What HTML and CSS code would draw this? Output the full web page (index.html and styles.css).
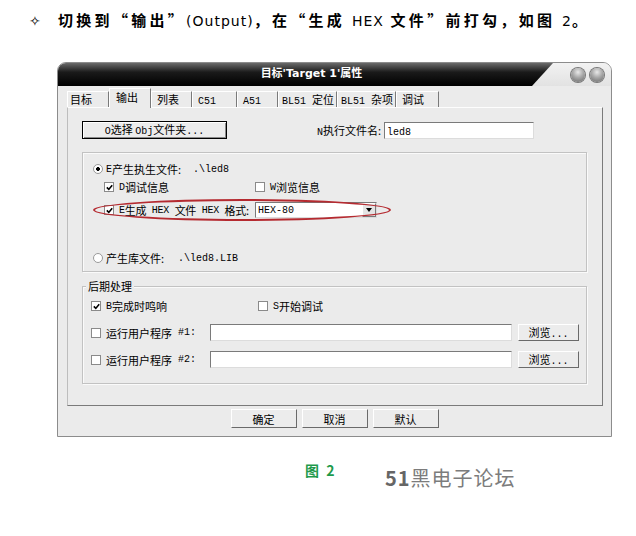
FILE: index.html
```html
<!DOCTYPE html>
<html lang="zh-CN">
<head>
  <meta charset="UTF-8">
  <meta name="viewport" content="width=device-width, initial-scale=1.0">
  <title>输出设置</title>
  <link rel="stylesheet" href="styles.css">
</head>
<body>
  <p class="intro"><span class="star">✧</span>切换到“输出”<span class="lat">(Output)</span>，在“生成 <span class="lat">HEX</span> 文件”前打勾，如图 <span class="lat">2</span>。</p>

  <div class="window">
    <div class="titlebar">
      <div class="title">目标'Target 1'属性</div>
      <div class="controls"><span class="knob"></span><span class="knob"></span></div>
    </div>

    <div class="tabs">
      <div class="tab first">目标</div>
      <div class="tab active">输出</div>
      <div class="tab w41">列表</div>
      <div class="tab w45"><span class="m">C51</span></div>
      <div class="tab w41"><span class="m">A51</span></div>
      <div class="tab w59"><span class="m">BL51 </span>定位</div>
      <div class="tab w59"><span class="m">BL51 </span>杂项</div>
      <div class="tab w43">调试</div>
    </div>

    <div class="panel">
      <div class="line top-row">
        <button class="btn default"><span class="m">O</span>选择 <span class="m">Obj</span>文件夹<span class="m">...</span></button>
        <span class="name-label"><span class="m">N</span>执行文件名:</span>
        <span class="field name-field"><span class="m">led8</span></span>
      </div>

      <div class="group output-group">
        <div class="line radio-line"><span class="radio on"></span><span class="m">E</span>产生执生文件:<span class="m path exe">.\led8</span></div>
        <div class="line sub">
          <span class="cell"><span class="cb"><svg width="7" height="7" viewBox="0 0 7 7"><path d="M0.8 3.4 L2.8 5.4 L6.2 1.2" fill="none" stroke="#000" stroke-width="1.6"/></svg></span><span class="m">D</span>调试信息</span>
          <span class="cell"><span class="cb"></span><span class="m">W</span>浏览信息</span>
        </div>
        <div class="line sub hex">
          <span class="cell tight"><span class="cb"><svg width="7" height="7" viewBox="0 0 7 7"><path d="M0.8 3.4 L2.8 5.4 L6.2 1.2" fill="none" stroke="#000" stroke-width="1.6"/></svg></span><span class="m">E</span>生成<span class="m"> HEX </span>文件<span class="m"> HEX </span>格式:</span>
          <span class="select"><span class="m">HEX-80</span><span class="drop"></span></span>
        </div>
        <div class="line radio-line lib"><span class="radio"></span>产生库文件:<span class="m path libpath">.\led8.LIB</span></div>
        <span class="mark"></span>
      </div>

      <div class="group post-group">
        <div class="legend">后期处理</div>
        <div class="line first-line">
          <span class="cell beep"><span class="cb"><svg width="7" height="7" viewBox="0 0 7 7"><path d="M0.8 3.4 L2.8 5.4 L6.2 1.2" fill="none" stroke="#000" stroke-width="1.6"/></svg></span><span class="m">B</span>完成时鸣响</span>
          <span class="cell"><span class="cb"></span><span class="m">S</span>开始调试</span>
        </div>
        <div class="line run">
          <span class="cell prog"><span class="cb"></span>运行用户程序<span class="m"> #1:</span></span>
          <span class="field prog-field"></span>
          <button class="btn browse">浏览<span class="m">...</span></button>
        </div>
        <div class="line run">
          <span class="cell prog"><span class="cb"></span>运行用户程序<span class="m"> #2:</span></span>
          <span class="field prog-field"></span>
          <button class="btn browse">浏览<span class="m">...</span></button>
        </div>
      </div>
    </div>

    <div class="actions">
      <button class="btn action">确定</button>
      <button class="btn action">取消</button>
      <button class="btn action">默认</button>
    </div>
  </div>

  <div class="caption">
    <span class="fig">图 2</span>
    <span class="site"><b>51</b>黑电子论坛</span>
  </div>
</body>
</html>
```

FILE: styles.css
```css
body {
  margin: 0;
  width: 636px;
  height: 536px;
  background: #fff;
  font-family: "Noto Sans CJK SC", sans-serif;
  font-size: 11px;
  color: #000;
  overflow: hidden;
}

/* 西文部分用等宽字体 */
.m {
  font-family: "Liberation Mono", monospace;
  font-size: 10px;
  white-space: pre;
}

/* 说明文字 */
.intro {
  margin: 10px 0 0 29px;
  height: 20px;
  line-height: 20px;
  font-family: "Noto Sans CJK SC", sans-serif;
  font-size: 15px;
  font-weight: bold;
  letter-spacing: 3.3px;
  white-space: nowrap;
}

.intro .star {
  display: inline-block;
  width: 29px;
  font-family: "DejaVu Sans", sans-serif;
  font-size: 14px;
  font-weight: normal;
  letter-spacing: 0;
}

.intro .lat {
  font-family: "DejaVu Sans", sans-serif;
  font-size: 14px;
  font-weight: normal;
  letter-spacing: 1px;
}

/* 窗口 */
.window {
  margin: 32px 0 0 57px;
  width: 555px;
  height: 375px;
  box-sizing: border-box;
  border: 1px solid #8c8c8c;
  border-radius: 9px 9px 0 0;
  background: #ebebeb;
  overflow: hidden;
}

.titlebar {
  display: flex;
  height: 23px;
  background: linear-gradient(#f2f2f2, #e2e2e2);
}

.title {
  width: 495px;
  padding-left: 12px;
  box-sizing: border-box;
  background: linear-gradient(#6a6a6a, #1a1a1a 40%, #000);
  clip-path: polygon(0 0, 100% 0, calc(100% - 21px) 100%, 0 100%);
  color: #fff;
  font: bold 11px "DejaVu Sans", "Noto Sans CJK SC", sans-serif;
  line-height: 22px;
  text-align: center;
}

.controls {
  flex: 1;
  display: flex;
  justify-content: flex-end;
  align-items: center;
  gap: 5px;
  padding-right: 7px;
}

.knob {
  width: 14px;
  height: 14px;
  border-radius: 50%;
  background: radial-gradient(circle at 50% 30%, #e8e8e8, #a8a8a8 45%, #666 100%);
  box-shadow: 0 0 0 1px #777;
}

/* 选项卡 */
.tabs {
  display: flex;
  align-items: flex-end;
  height: 21px;
  margin-left: 9px;
}

.tab {
  width: 42px;
  height: 16px;
  box-sizing: border-box;
  padding-left: 5px;
  line-height: 15px;
  border-top: 1px solid #fff;
  border-left: 1px solid #fff;
  border-right: 1px solid #7a7a7a;
  white-space: nowrap;
}

.tab.first {
  padding-left: 2px;
}

.tab.active {
  position: relative;
  z-index: 1;
  height: 20px;
  margin-bottom: -1px;
  padding-left: 6px;
  line-height: 16px;
  background: #ebebeb;
}

.w41 { width: 41px; }
.w43 { width: 43px; }
.w45 { width: 45px; }
.w59 { width: 59px; padding-left: 3px; }

.panel {
  margin: 0 8px 0 9px;
  height: 299px;
  box-sizing: border-box;
  padding: 13px 0 0 14px;
  border: 1px solid;
  border-color: #fdfdfd #7a7a7a #7a7a7a #bdbdbd;
}

.line {
  display: flex;
  align-items: center;
  height: 18px;
  white-space: nowrap;
}

/* 按钮与输入框 */
.btn {
  height: 18px;
  box-sizing: border-box;
  padding: 0;
  font: inherit;
  line-height: 14px;
  color: #000;
  background: #ececec;
  border: 1px solid;
  border-color: #fff #6a6a6a #6a6a6a #fff;
}

.btn.default {
  width: 145px;
  border-color: #000;
  box-shadow: inset 1px 1px 0 #fff, inset -1px -1px 0 #8a8a8a;
}

.name-label {
  margin-left: 90px;
}

.field {
  height: 17px;
  box-sizing: border-box;
  padding-left: 2px;
  line-height: 15px;
  background: #fff;
  border: 1px solid;
  border-color: #7a7a7a #dcdcdc #dcdcdc #7a7a7a;
}

.name-field {
  width: 150px;
  margin-left: 3px;
}

/* 分组框 */
.group {
  width: 505px;
  box-sizing: border-box;
  border: 1px solid #c2c2c2;
  box-shadow: inset 1px 1px 0 #fafafa, 1px 1px 0 #fafafa;
}

.output-group {
  position: relative;
  margin-top: 13px;
  height: 120px;
  padding-top: 7px;
}

.radio-line {
  padding-left: 10px;
}

.sub {
  padding-left: 21px;
}

.hex {
  margin-top: 5px;
}

.lib {
  margin-top: 30px;
}

.cell {
  display: flex;
  align-items: center;
  width: 151px;
}

.cell.tight {
  letter-spacing: -0.3px;
}

.cb {
  display: inline-flex;
  align-items: center;
  justify-content: center;
  flex: none;
  width: 10px;
  height: 10px;
  box-sizing: border-box;
  margin-right: 5px;
  background: #fff;
  border: 1px solid #8a8a8a;
}

.radio {
  flex: none;
  width: 10px;
  height: 10px;
  box-sizing: border-box;
  margin-right: 3px;
  border-radius: 50%;
  background: #fff;
  border: 1px solid #9a9a9a;
}

.radio.on {
  background: radial-gradient(circle, #000 1.6px, #fff 2.2px);
}

.path.exe {
  margin-left: 12px;
}

.path.libpath {
  margin-left: 14px;
}

.select {
  display: flex;
  justify-content: space-between;
  align-items: center;
  width: 122px;
  height: 16px;
  box-sizing: border-box;
  padding-left: 2px;
  background: #fff;
  border: 1px solid;
  border-color: #7a7a7a #dcdcdc #dcdcdc #7a7a7a;
}

.drop {
  position: relative;
  width: 14px;
  height: 14px;
  box-sizing: border-box;
  background: #e4e4e4;
  border: 1px solid;
  border-color: #fff #7a7a7a #7a7a7a #fff;
}

.drop::after {
  content: "";
  position: absolute;
  left: 3px;
  top: 4px;
  border-left: 3px solid transparent;
  border-right: 3px solid transparent;
  border-top: 4px solid #000;
}

/* 红色标注圈 */
.mark {
  position: absolute;
  left: 10px;
  top: 46px;
  width: 298px;
  height: 22px;
  box-sizing: border-box;
  border: 2px solid #b52a30;
  border-radius: 50%;
}

.post-group {
  margin-top: 14px;
  height: 98px;
  padding-left: 8px;
}

.legend {
  width: fit-content;
  margin: -8px 0 0 -5px;
  padding: 0 2px;
  line-height: 14px;
  background: #ebebeb;
}

.first-line {
  margin-top: 4px;
}

.run {
  height: 19px;
  margin-top: 8px;
}

.cell.beep {
  width: 167px;
}

.cell.prog {
  width: 119px;
}

.prog-field {
  width: 302px;
}

.btn.browse {
  width: 61px;
  height: 17px;
  margin-left: 6px;
}

.actions {
  display: flex;
  justify-content: center;
  gap: 5px;
  margin-top: 3px;
}

.btn.action {
  width: 66px;
  height: 19px;
}

/* 图注 */
.caption {
  display: flex;
  align-items: flex-start;
  margin-top: 25px;
}

.fig {
  width: 30px;
  margin-left: 305px;
  font: bold 14px "Noto Sans CJK SC", sans-serif;
  line-height: 16px;
  letter-spacing: 2px;
  color: #1e9a4c;
  white-space: nowrap;
}

.site {
  margin: 4px 0 0 50px;
  font: 20px "Noto Sans CJK SC", sans-serif;
  line-height: 24px;
  letter-spacing: 1px;
  color: #7c7c7c;
}

.site b {
  font-weight: 600;
  color: #666;
}
```
